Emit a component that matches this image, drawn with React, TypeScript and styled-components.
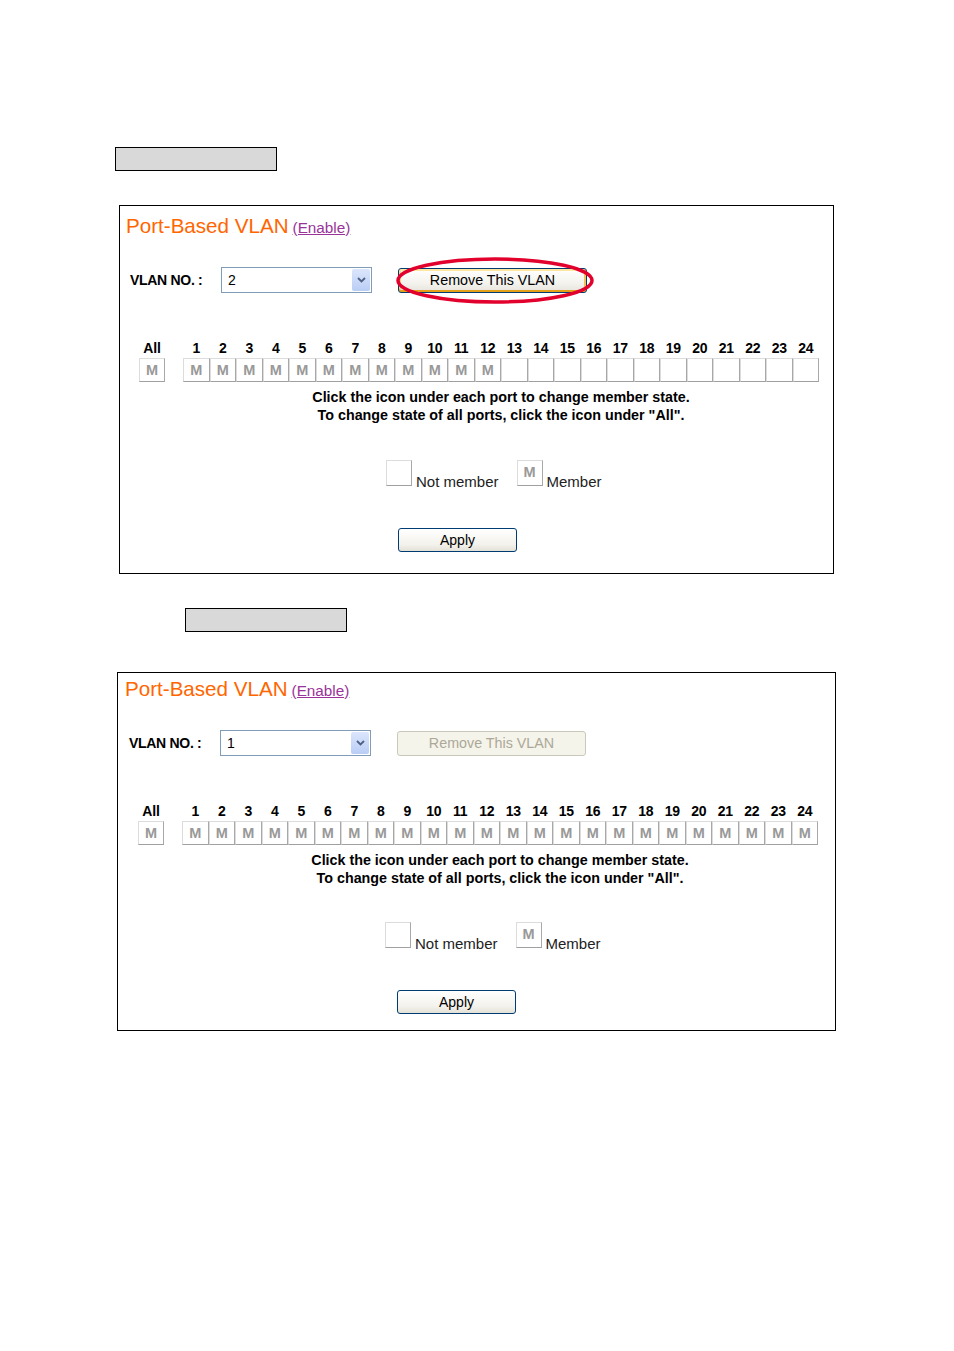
import React from 'react'
import styled, { createGlobalStyle } from 'styled-components'

const GlobalStyle = createGlobalStyle`
  html, body {
    margin: 0;
    padding: 0;
    background: #fff;
  }
  body {
    font-family: 'Liberation Sans', Arial, sans-serif;
    color: #000;
  }
`

const Page = styled.div`
  width: 954px;
  min-height: 1351px;
  padding-top: 147px;
  box-sizing: border-box;
`

const Caption = styled.div<{ $left: number; $top: number }>`
  margin: ${p => p.$top}px 0 0 ${p => p.$left}px;
  width: 162px;
  height: 24px;
  box-sizing: border-box;
  border: 1px solid #000;
  background: #d9d9d9;
`

const Panel = styled.section<{ $left: number; $width: number; $top: number; $padTop: number; $padBottom: number; $padLeft: number }>`
  margin: ${p => p.$top}px 0 0 ${p => p.$left}px;
  width: ${p => p.$width}px;
  box-sizing: border-box;
  border: 1px solid #000;
  padding: ${p => p.$padTop}px 0 ${p => p.$padBottom}px ${p => p.$padLeft}px;
`

const TitleRow = styled.div`
  height: 24px;
  display: flex;
  align-items: center;
  gap: 4px;
`

const Title = styled.span`
  font-size: 20.6px;
  color: #ff6600;
  white-space: nowrap;
`

const EnableLink = styled.a`
  font-size: 15.3px;
  color: #993399;
  text-decoration: underline;
  margin-top: 3px;
  cursor: pointer;
`

const VlanRow = styled.div`
  margin: 29px 0 0 4px;
  height: 26px;
  display: flex;
  align-items: center;
`

const VlanLabel = styled.span`
  width: 91px;
  font-size: 14px;
  font-weight: bold;
  letter-spacing: -0.3px;
  white-space: nowrap;
`

const Select = styled.div`
  width: 151px;
  height: 26px;
  box-sizing: border-box;
  border: 1px solid #7f9db9;
  display: flex;
  align-items: center;
  padding: 1px;
`

const SelectValue = styled.span`
  flex: 1;
  font-size: 14px;
  padding-left: 5px;
`

const SelectArrow = styled.span`
  width: 18px;
  height: 22px;
  border-radius: 2px;
  background: linear-gradient(#dce6fc, #b9cdf5);
  display: flex;
  align-items: center;
  justify-content: center;
`

const RemoveWrap = styled.div`
  position: relative;
  margin-left: 26px;
  width: 189px;
  height: 25px;
`

const RemoveButton = styled.button<{ $disabled?: boolean }>`
  width: 100%;
  height: 100%;
  box-sizing: border-box;
  border-radius: 3px;
  font-family: 'Liberation Sans', Arial, sans-serif;
  font-size: 14.3px;
  padding: 0;
  border: 1px solid ${p => (p.$disabled ? '#cac8bb' : '#003c74')};
  color: ${p => (p.$disabled ? '#aca899' : '#000')};
  background: ${p => (p.$disabled ? '#f5f4ea' : 'linear-gradient(#ffffff, #f4f3ee 60%, #e6e4dc)')};
  box-shadow: ${p =>
    p.$disabled
      ? 'none'
      : 'inset 0 -2px 0 #e5a01a, inset -2px 0 0 #f5c15a, inset 0 2px 0 #ffe7a2, inset 2px 0 0 #fbd47c'};
`

const Ring = styled.svg`
  position: absolute;
  left: -3px;
  top: -11px;
  pointer-events: none;
`

const Ports = styled.div`
  margin: 47px 0 0 13px;
  display: flex;
  gap: 18px;
`

const PortGroup = styled.div<{ $cols: number; $col: number }>`
  display: grid;
  grid-template-columns: repeat(${p => p.$cols}, ${p => p.$col}px);
  grid-template-rows: 16px 24px;
  row-gap: 2px;
`

const PortNo = styled.span`
  font-size: 14px;
  font-weight: bold;
  text-align: center;
  line-height: 16px;
  letter-spacing: -0.2px;
`

const Cell = styled.span<{ $member: boolean }>`
  box-sizing: border-box;
  height: 24px;
  background: #fff;
  border-top: 1px solid #dcdcdc;
  border-left: 1px solid #dcdcdc;
  border-right: 1px solid #a8a8a8;
  border-bottom: 1px solid #a0a0a0;
  color: #999;
  font-size: 14.5px;
  font-weight: bold;
  display: flex;
  align-items: center;
  justify-content: center;
  & > i {
    font-style: normal;
    visibility: ${p => (p.$member ? 'visible' : 'hidden')};
  }
`

const Notes = styled.div`
  margin: 6px 0 0 57px;
  width: 636px;
  text-align: center;
  font-size: 14.3px;
  font-weight: bold;
  line-height: 18px;
  white-space: nowrap;
`

const Legend = styled.div<{ $top: number }>`
  margin: ${p => p.$top}px 0 0 260px;
  display: flex;
  align-items: flex-end;
`

const LegendBox = styled(Cell)`
  width: 26px;
  height: 26px;
  align-items: flex-start;
  padding-top: 3px;
`

const LegendText = styled.span<{ $gap?: number }>`
  font-size: 15px;
  color: #222;
  margin: 0 ${p => p.$gap ?? 0}px -4px 4px;
`

const ApplyButton = styled.button`
  display: block;
  margin: 42px 0 0 272px;
  width: 119px;
  height: 24px;
  box-sizing: border-box;
  border: 1px solid #003c74;
  border-radius: 3px;
  background: linear-gradient(#ffffff, #f3f2ec 70%, #e3e1d7);
  font-family: 'Liberation Sans', Arial, sans-serif;
  font-size: 14px;
  color: #000;
  padding: 0;
`

type VlanProps = {
  vlan: string
  members: number
  removable: boolean
  left: number
  width: number
  top: number
  padTop: number
  padBottom: number
  padLeft: number
  legendGap: number
}

const ports = Array.from({ length: 24 }, (_, i) => i + 1)

function VlanPanel({ vlan, members, removable, left, width, top, padTop, padBottom, padLeft, legendGap }: VlanProps): JSX.Element {
  return (
    <Panel $left={left} $width={width} $top={top} $padTop={padTop} $padBottom={padBottom} $padLeft={padLeft}>
      <TitleRow>
        <Title>Port-Based VLAN</Title>
        <EnableLink>(Enable)</EnableLink>
      </TitleRow>
      <VlanRow>
        <VlanLabel>VLAN NO. :</VlanLabel>
        <Select>
          <SelectValue>{vlan}</SelectValue>
          <SelectArrow>
            <svg width="9" height="6" viewBox="0 0 9 6">
              <path d="M1 1 L4.5 4.5 L8 1" fill="none" stroke="#4d6185" strokeWidth="1.8" />
            </svg>
          </SelectArrow>
        </Select>
        <RemoveWrap>
          <RemoveButton $disabled={!removable}>Remove This VLAN</RemoveButton>
          {removable && (
            <Ring width="200" height="47" viewBox="0 0 200 47">
              <ellipse cx="100" cy="23.5" rx="97" ry="21.5" fill="none" stroke="#e2002c" strokeWidth="3.5" />
            </Ring>
          )}
        </RemoveWrap>
      </VlanRow>
      <Ports>
        <PortGroup $cols={1} $col={26}>
          <PortNo>All</PortNo>
          <Cell $member><i>M</i></Cell>
        </PortGroup>
        <PortGroup $cols={24} $col={26.5}>
          {ports.map(n => (
            <PortNo key={'n' + n}>{n}</PortNo>
          ))}
          {ports.map(n => (
            <Cell key={'c' + n} $member={n <= members}><i>M</i></Cell>
          ))}
        </PortGroup>
      </Ports>
      <Notes>
        Click the icon under each port to change member state.
        <br />
        To change state of all ports, click the icon under "All".
      </Notes>
      <Legend $top={legendGap}>
        <LegendBox $member={false}><i>M</i></LegendBox>
        <LegendText $gap={18}>Not member</LegendText>
        <LegendBox $member><i>M</i></LegendBox>
        <LegendText>Member</LegendText>
      </Legend>
      <ApplyButton>Apply</ApplyButton>
    </Panel>
  )
}

export default function App(): JSX.Element {
  return (
    <Page>
      <GlobalStyle />
      <Caption $left={115} $top={0} />
      <VlanPanel vlan="2" members={12} removable left={119} width={715} top={34} padTop={8} padBottom={21} padLeft={6} legendGap={36} />
      <Caption $left={185} $top={34} />
      <VlanPanel vlan="1" members={24} removable={false} left={117} width={719} top={40} padTop={4} padBottom={16} padLeft={7} legendGap={35} />
    </Page>
  )
}
